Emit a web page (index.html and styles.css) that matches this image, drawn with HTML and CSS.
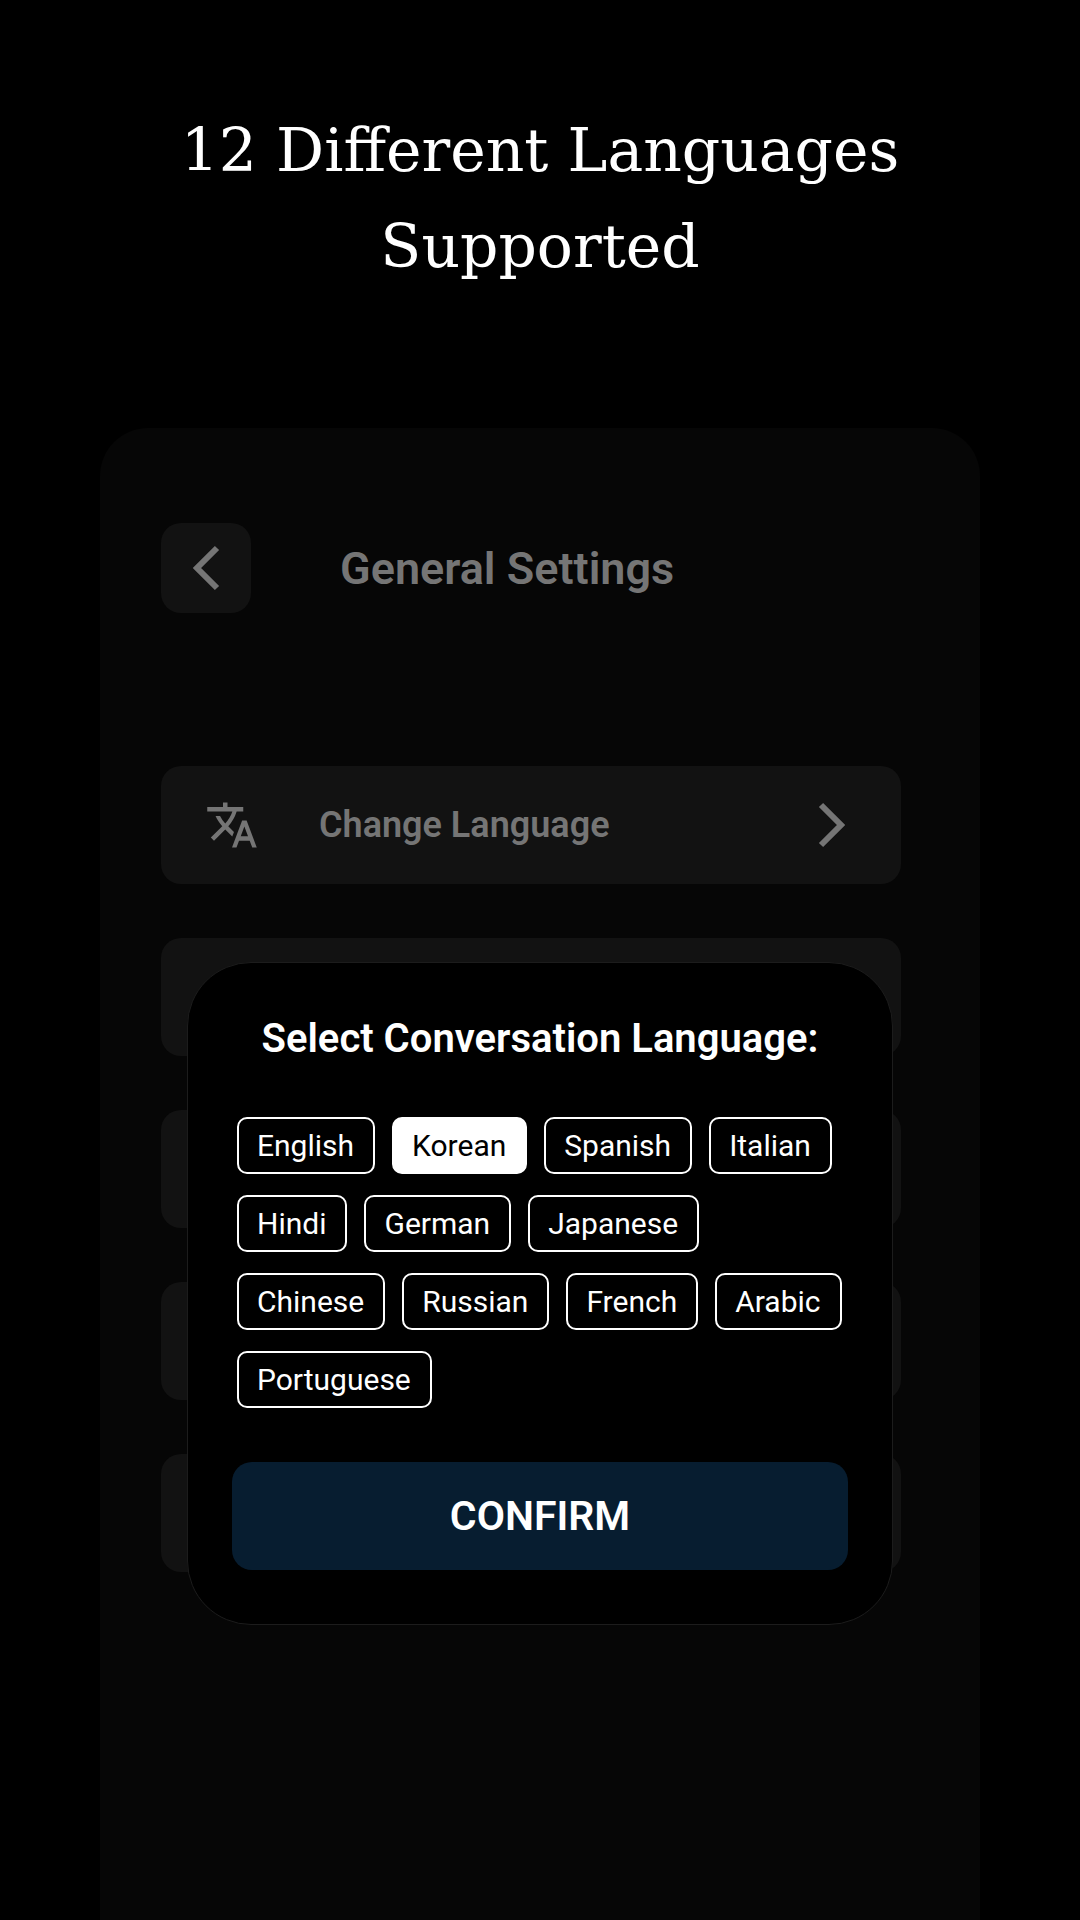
FILE: index.html
```html
<!DOCTYPE html>
<html lang="en">
<head>
    <meta charset="UTF-8">
    <meta name="viewport" content="width=device-width, initial-scale=1.0">
    <title>General Settings</title>
    <link rel="stylesheet" href="styles.css">
</head>
<body>

<h1 class="headline">12 Different Languages Supported</h1>

<main class="screen">
    <header class="top_bar">
        <button class="back_btn" aria-label="Back">
            <svg width="28" height="46" viewBox="0 0 28 46"><path d="M25 3L5 23l20 20"/></svg>
        </button>
        <h2>General Settings</h2>
    </header>

    <div class="settings_list">
        <button class="setting">
            <svg class="translate" width="54" height="54" viewBox="0 0 24 24"><path d="M12.87 15.07l-2.54-2.51.03-.03A17.52 17.52 0 0 0 14.07 6H17V4h-7V2H8v2H1v2h11.17C11.5 7.92 10.44 9.75 9 11.35 8.07 10.32 7.3 9.19 6.69 8h-2c.73 1.63 1.73 3.17 2.98 4.56l-5.09 5.02L4 19l5-5 3.11 3.11.76-2.04zM18.5 10h-2L12 22h2l1.12-3h4.75L21 22h2l-4.5-12zm-2.62 7l1.62-4.33L19.12 17h-3.24z"/></svg>
            <span>Change Language</span>
            <svg class="chevron" width="28" height="46" viewBox="0 0 28 46"><path d="M4 3l20 20L4 43"/></svg>
        </button>
        <div class="setting"></div>
        <div class="setting"></div>
        <div class="setting"></div>
        <div class="setting"></div>
    </div>

    <!-- language popup -->
    <div class="modal" role="dialog" aria-labelledby="modal_title">
        <h3 id="modal_title">Select Conversation Language:</h3>
        <div class="languages">
            <button class="lang">English</button>
            <button class="lang selected">Korean</button>
            <button class="lang">Spanish</button>
            <button class="lang">Italian</button>
            <button class="lang">Hindi</button>
            <button class="lang">German</button>
            <button class="lang">Japanese</button>
            <button class="lang">Chinese</button>
            <button class="lang">Russian</button>
            <button class="lang">French</button>
            <button class="lang">Arabic</button>
            <button class="lang">Portuguese</button>
        </div>
        <button class="confirm">CONFIRM</button>
    </div>
</main>

</body>
</html>
```
FILE: styles.css
```css
* {
    box-sizing: border-box;
}

body {
    margin: 0;
    min-height: 100vh;
    display: flex;
    flex-direction: column;
    background-color: #000;
    color: #fff;
    font-family: Roboto, "Liberation Sans", sans-serif;
}

button {
    font-family: inherit;
    color: inherit;
    border: none;
    cursor: pointer;
}

.headline {
    margin: 0;
    padding: 102px 150px 134px;
    font-family: "DejaVu Serif", serif;
    font-weight: 400;
    font-size: 60px;
    line-height: 96px;
    text-align: center;
}

.screen {
    position: relative;
    flex: 1;
    margin: 0 100px;
    padding: 95px 79px 0 61px;
    background-color: #060606;
    border-radius: 48px 48px 0 0;
    color: #757575;
}

.top_bar {
    display: flex;
    align-items: center;
    gap: 89px;
    margin-bottom: 153px;
}

.top_bar h2 {
    margin: 0;
    font-size: 45px;
    font-weight: 600;
}

.back_btn {
    display: flex;
    align-items: center;
    justify-content: center;
    width: 90px;
    height: 90px;
    padding: 0;
    background-color: #121212;
    border-radius: 20px;
}

.back_btn path,
.chevron path {
    fill: none;
    stroke: #757575;
    stroke-width: 6;
}

.settings_list {
    display: flex;
    flex-direction: column;
    gap: 54px;
}

.setting {
    display: flex;
    align-items: center;
    height: 118px;
    padding: 0 56px 0 44px;
    background-color: #121212;
    border-radius: 20px;
    font-size: 36px;
    font-weight: 600;
}

.setting span {
    margin-left: 60px;
}

.translate {
    fill: #757575;
}

.chevron {
    margin-left: auto;
}

/* popup sits over the list */
.modal {
    position: absolute;
    top: 534px;
    left: 87px;
    right: 87px;
    padding: 46px 44px 54px;
    background-color: #000;
    border: 1px solid #1c1c1c;
    border-radius: 64px;
    color: #fff;
}

.modal h3 {
    margin: 0 0 48px;
    font-size: 40px;
    font-weight: 600;
    line-height: 60px;
    text-align: center;
}

.languages {
    display: flex;
    flex-wrap: wrap;
    gap: 21px 17px;
    padding-left: 5px;
    margin-bottom: 54px;
}

.lang {
    height: 57px;
    padding: 0 19px 0 18px;
    background-color: transparent;
    border: 2px solid #fff;
    border-radius: 10px;
    font-size: 30px;
}

.selected {
    background-color: #fff;
    color: #000;
}

.confirm {
    width: 100%;
    height: 108px;
    background-color: #071d30;
    border-radius: 20px;
    font-size: 41px;
    font-weight: 600;
}
```
